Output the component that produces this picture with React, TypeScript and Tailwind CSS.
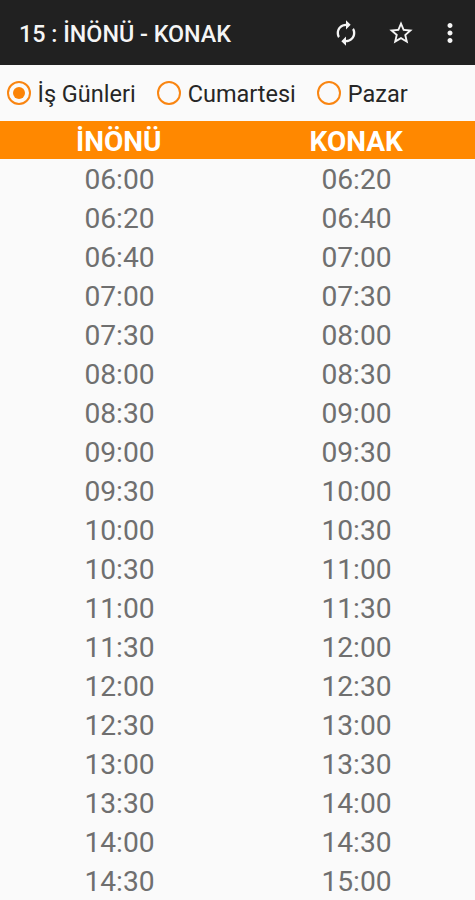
import { useState } from "react";
import { MdAutorenew, MdMoreVert, MdStarBorder } from "react-icons/md";
import clsx from "clsx";

const DAYS = ["İş Günleri", "Cumartesi", "Pazar"];

const TIMES = [
  ["06:00", "06:20"],
  ["06:20", "06:40"],
  ["06:40", "07:00"],
  ["07:00", "07:30"],
  ["07:30", "08:00"],
  ["08:00", "08:30"],
  ["08:30", "09:00"],
  ["09:00", "09:30"],
  ["09:30", "10:00"],
  ["10:00", "10:30"],
  ["10:30", "11:00"],
  ["11:00", "11:30"],
  ["11:30", "12:00"],
  ["12:00", "12:30"],
  ["12:30", "13:00"],
  ["13:00", "13:30"],
  ["13:30", "14:00"],
  ["14:00", "14:30"],
  ["14:30", "15:00"],
];

function Toolbar() {
  return (
    <header className="flex h-[65px] shrink-0 items-center bg-[#212121] pt-px pr-[10px] pl-[19px] text-[#f5f5f5]">
      <h1 className="flex-1 pt-[2px] text-[23.3px] font-medium whitespace-nowrap">15 : İNÖNÜ - KONAK</h1>
      <button type="button" aria-label="Yenile" className="mr-[27px]">
        <MdAutorenew className="size-7" />
      </button>
      <button type="button" aria-label="Favori" className="mr-5">
        <MdStarBorder className="size-7" />
      </button>
      <button type="button" aria-label="Menü">
        <MdMoreVert className="size-[30px]" />
      </button>
    </header>
  );
}

type DayOptionProps = {
  label: string;
  checked: boolean;
  onSelect: () => void;
};

function DayOption({ label, checked, onSelect }: DayOptionProps) {
  return (
    <button type="button" role="radio" aria-checked={checked} onClick={onSelect} className="flex items-center gap-[6.5px]">
      <span className="flex size-6 items-center justify-center rounded-full border-2 border-[#f98511]">
        <span className={clsx("size-3 rounded-full", checked && "bg-[#fb8307]")} />
      </span>
      <span className="pt-[2px] text-[23.5px] leading-8 whitespace-nowrap text-[#262626]">{label}</span>
    </button>
  );
}

export default function App() {
  const [day, setDay] = useState(0);

  return (
    <div className="flex h-[900px] w-full flex-col overflow-hidden bg-[#fafafa] font-['Roboto',sans-serif]">
      <Toolbar />

      <div role="radiogroup" className="flex h-14 shrink-0 items-center gap-[21.5px] pl-[7px]">
        {DAYS.map((label, i) => (
          <DayOption key={label} label={label} checked={day === i} onSelect={() => setDay(i)} />
        ))}
      </div>

      <div className="grid h-[37.5px] shrink-0 grid-cols-2 items-center bg-[#ff8800] pt-[2px] text-center text-[28px] leading-[37px] font-bold text-white">
        <span>İNÖNÜ</span>
        <span>KONAK</span>
      </div>

      <div className="pt-px pl-px">
        {TIMES.map(([from, to]) => (
          <div
            key={from}
            className="grid h-[39.06px] grid-cols-2 items-center text-center text-[28.2px] leading-[39px] text-[#6f6f6f]"
          >
            <span>{from}</span>
            <span>{to}</span>
          </div>
        ))}
      </div>
    </div>
  );
}
